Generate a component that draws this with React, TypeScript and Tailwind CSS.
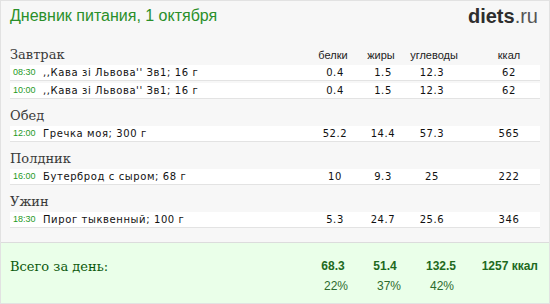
import React from "react";

type Item = { time: string; name: string; b: string; f: string; c: string; k: string };
type Meal = { title: string; items: Item[] };

const meals: Meal[] = [
  {
    title: "Завтрак",
    items: [
      { time: "08:30", name: ",,Кава зі Львова'' Зв1; 16 г", b: "0.4", f: "1.5", c: "12.3", k: "62" },
      { time: "10:00", name: ",,Кава зі Львова'' Зв1; 16 г", b: "0.4", f: "1.5", c: "12.3", k: "62" },
    ],
  },
  { title: "Обед", items: [{ time: "12:00", name: "Гречка моя; 300 г", b: "52.2", f: "14.4", c: "57.3", k: "565" }] },
  { title: "Полдник", items: [{ time: "16:00", name: "Бутерброд с сыром; 68 г", b: "10", f: "9.3", c: "25", k: "222" }] },
  { title: "Ужин", items: [{ time: "18:30", name: "Пирог тыквенный; 100 г", b: "5.3", f: "24.7", c: "25.6", k: "346" }] },
];

const serif = "font-['DejaVu_Serif',serif]";
const mono = "font-['DejaVu_Sans',sans-serif]";
const sans = "font-['Liberation_Sans',Arial,sans-serif]";

function Row({ it }: { it: Item }) {
  return (
    <div className="flex items-center h-[16px] bg-white border-b border-[#e3e3e3] mt-[2px] first:mt-0">
      <div className="w-[300px] flex items-center">
        <span className={`${sans} text-[9px] text-[#1f9a1f] w-[33px] pl-[3px]`}>{it.time}</span>
        <span className={`${mono} text-[10px] tracking-[0.6px] text-[#111]`}>{it.name}</span>
      </div>
      <div className={`${mono} text-[10px] tracking-[0.6px] text-[#111] flex`}>
        <span className="w-[50px] text-center">{it.b}</span>
        <span className="w-[46px] text-center">{it.f}</span>
        <span className="w-[52px] text-center">{it.c}</span>
        <span className="w-[23px]" />
        <span className="w-[56px] text-center">{it.k}</span>
      </div>
    </div>
  );
}

export default function App() {
  return (
    <div className="w-[550px] h-[304px] bg-[#f7f7f7] border border-[#e2e2e2] flex flex-col">
      <div className="flex justify-between items-start h-[45px] px-[9px]">
        <div className={`${sans} text-[16px] leading-[20px] text-[#2a8f2a] pt-[5px]`}>Дневник питания, 1 октября</div>
        <div className={`${sans} text-[20px] leading-[22px] pt-[4px] pr-[2px]`}>
          <span className="font-bold text-[#2e2e2e]">diets</span>
          <span className="text-[#555]">.ru</span>
        </div>
      </div>
      <div className="px-[9px]">
        {meals.map((m, i) => (
          <div key={m.title}>
            <div className={`flex items-end ${i === 0 ? "h-[18px]" : "h-[26px]"}`}>
              <div className={`${serif} text-[13px] leading-[18px] text-[#3a3a3a] w-[300px]`}>{m.title}</div>
              {i === 0 && (
                <div className={`${sans} text-[11px] leading-[18px] text-[#222] flex`}>
                  <span className="w-[46px] text-center">белки</span>
                  <span className="w-[50px] text-center">жиры</span>
                  <span className="w-[56px] text-center">углеводы</span>
                  <span className="w-[19px]" />
                  <span className="w-[56px] text-center">ккал</span>
                </div>
              )}
            </div>
            <div className="pt-[1px]">
              {m.items.map((it, j) => (
                <Row key={j} it={it} />
              ))}
            </div>
          </div>
        ))}
      </div>
      <div className="mt-auto h-[61px] bg-[#eaffe9] border-t border-[#dcdcdc] flex px-[9px] pt-[13px]">
        <div className={`${serif} text-[13px] leading-[18px] text-[#0d5a0d] w-[296px] pt-[2px]`}>Всего за день:</div>
        <div className="flex flex-col">
          <div className={`${sans} text-[12px] font-bold leading-[20px] text-[#1e6a1e] flex`}>
            <span className="w-[54px] text-center">68.3</span>
            <span className="w-[50px] text-center">51.4</span>
            <span className="w-[62px] text-center">132.5</span>
            <span className="w-[66px] text-right">1257 ккал</span>
          </div>
          <div className={`${sans} text-[12px] leading-[20px] text-[#2d6b2d] flex`}>
            <span className="w-[60px] text-center">22%</span>
            <span className="w-[46px] text-center">37%</span>
            <span className="w-[60px] text-center">42%</span>
          </div>
        </div>
      </div>
    </div>
  );
}
